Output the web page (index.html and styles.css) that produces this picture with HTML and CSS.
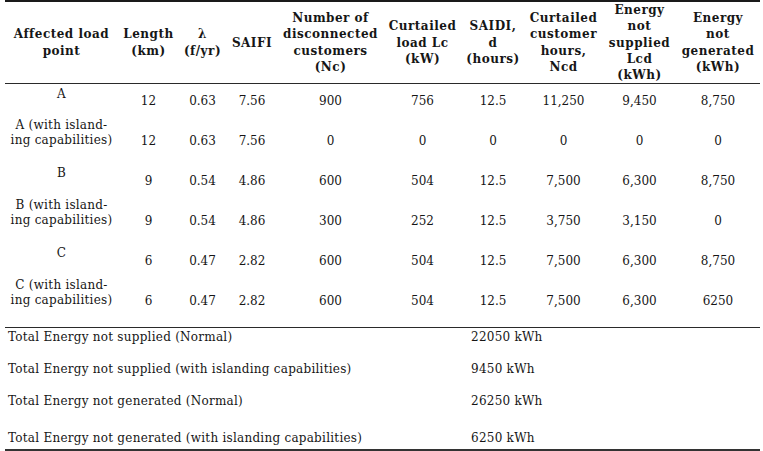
FILE: index.html
```html
<!DOCTYPE html>
<html>
<head>
<meta charset="utf-8">
<link rel="stylesheet" href="styles.css">
</head>
<body>
<table class="rel">
  <colgroup>
    <col class="c1"><col class="c2"><col class="c3"><col class="c4"><col class="c5">
    <col class="c6"><col class="c7"><col class="c8"><col class="c9"><col class="c10">
  </colgroup>
  <thead>
    <tr>
      <th>Affected load<br>point</th>
      <th>Length<br>(km)</th>
      <th>λ<br>(f/yr)</th>
      <th>SAIFI</th>
      <th>Number of<br>disconnected<br>customers<br>(Nc)</th>
      <th>Curtailed<br>load Lc<br>(kW)</th>
      <th>SAIDI,<br>d<br>(hours)</th>
      <th>Curtailed<br>customer<br>hours,<br>Ncd</th>
      <th>Energy<br>not<br>supplied<br>Lcd<br>(kWh)</th>
      <th>Energy<br>not<br>generated<br>(kWh)</th>
    </tr>
  </thead>
  <tbody>
    <tr class="single">
      <td class="label">A</td><td>12</td><td>0.63</td><td>7.56</td><td>900</td><td>756</td><td>12.5</td><td>11,250</td><td>9,450</td><td>8,750</td>
    </tr>
    <tr class="double">
      <td class="label">A (with island-<br>ing capabilities)</td><td>12</td><td>0.63</td><td>7.56</td><td>0</td><td>0</td><td>0</td><td>0</td><td>0</td><td>0</td>
    </tr>
    <tr class="single">
      <td class="label">B</td><td>9</td><td>0.54</td><td>4.86</td><td>600</td><td>504</td><td>12.5</td><td>7,500</td><td>6,300</td><td>8,750</td>
    </tr>
    <tr class="double">
      <td class="label">B (with island-<br>ing capabilities)</td><td>9</td><td>0.54</td><td>4.86</td><td>300</td><td>252</td><td>12.5</td><td>3,750</td><td>3,150</td><td>0</td>
    </tr>
    <tr class="single">
      <td class="label">C</td><td>6</td><td>0.47</td><td>2.82</td><td>600</td><td>504</td><td>12.5</td><td>7,500</td><td>6,300</td><td>8,750</td>
    </tr>
    <tr class="double last">
      <td class="label">C (with island-<br>ing capabilities)</td><td>6</td><td>0.47</td><td>2.82</td><td>600</td><td>504</td><td>12.5</td><td>7,500</td><td>6,300</td><td>6250</td>
    </tr>
  </tbody>
  <tfoot>
    <tr class="total">
      <td colspan="6" class="tlabel">Total Energy not supplied (Normal)</td>
      <td colspan="4" class="tval">22050 kWh</td>
    </tr>
    <tr class="total">
      <td colspan="6" class="tlabel">Total Energy not supplied (with islanding capabilities)</td>
      <td colspan="4" class="tval">9450 kWh</td>
    </tr>
    <tr class="total">
      <td colspan="6" class="tlabel">Total Energy not generated (Normal)</td>
      <td colspan="4" class="tval">26250 kWh</td>
    </tr>
    <tr class="total final">
      <td colspan="6" class="tlabel">Total Energy not generated (with islanding capabilities)</td>
      <td colspan="4" class="tval">6250 kWh</td>
    </tr>
  </tfoot>
</table>
</body>
</html>
```

FILE: styles.css
```css
html, body {
  margin: 0;
  padding: 0;
  background: #ffffff;
}

body {
  font-family: "DejaVu Serif", "Liberation Serif", serif;
  font-size: 12px;
  color: #161616;
}

.rel {
  margin-left: 5px;
  width: 755px;
  table-layout: fixed;
  border-collapse: collapse;
  border-top: 2px solid #1a1a1a;
  border-bottom: 2px solid #333333;
}

.c1 { width: 113px; }
.c2 { width: 61px; }
.c3 { width: 47px; }
.c4 { width: 52px; }
.c5 { width: 105px; }
.c6 { width: 79px; }
.c7 { width: 62px; }
.c8 { width: 79px; }
.c9 { width: 73px; }
.c10 { width: 84px; }

.rel th {
  height: 79px;
  padding: 0;
  font-weight: bold;
  line-height: 16.3px;
  letter-spacing: 0.5px;
  text-align: center;
  vertical-align: middle;
  white-space: nowrap;
  border-bottom: 1px solid #2a2a2a;
}

.rel tbody td {
  padding: 3px 0 0 0;
  text-align: center;
  vertical-align: middle;
  line-height: 15px;
  white-space: nowrap;
}

.rel tbody td.label {
  vertical-align: top;
  padding-top: 2.5px;
  letter-spacing: 0.25px;
}

.single { height: 32px; }
.double { height: 48px; }

.double.last { height: 52px; }
.double.last td { padding-bottom: 4px; }
.double.last td.label { padding-bottom: 0; }

.rel tbody tr.last td {
  border-bottom: 1px solid #2a2a2a;
}

.total { height: 32px; }
.total td {
  padding: 2px 0 0 0;
  vertical-align: top;
  line-height: 15px;
  white-space: nowrap;
  letter-spacing: 0.25px;
}
.total td.tlabel { padding-left: 3px; }
.total td.tval { padding-left: 9px; }

.total.final { height: 26px; }
.total.final td { padding-top: 7px; }
```
